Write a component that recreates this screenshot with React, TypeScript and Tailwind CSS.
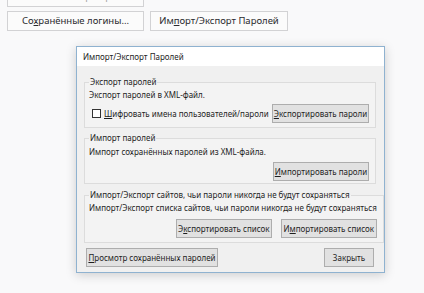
import React from 'react';

const font = { fontFamily: '"Noto Sans", "Open Sans", sans-serif' };

function TopButton({ children, disabled, w }: { children: React.ReactNode; disabled?: boolean; w: string }) {
  return (
    <button
      className={`${w} h-[20px] shrink-0 whitespace-nowrap border border-[#d2d2d4] bg-[#fbfbfb] text-[9.5px] leading-none ${disabled ? 'text-[#a0a0a0]' : 'text-[#2a2a2e]'}`}
    >
      {children}
    </button>
  );
}

function DlgButton({ children, w }: { children: React.ReactNode; w: string }) {
  return (
    <button className={`${w} h-[19px] shrink-0 whitespace-nowrap border border-[#adadad] bg-[#e1e1e1] text-[8px] leading-none text-[#1e1e1e]`}>
      {children}
    </button>
  );
}

function Group({ title, className, children }: { title: string; className: string; children: React.ReactNode }) {
  return (
    <fieldset className={`ml-[7px] w-[292px] border border-[#dcdcdc] bg-[#f3f3f3] ${className}`}>
      <legend className="ml-[4px] px-[1px] whitespace-nowrap text-[8px] leading-[12px] text-[#1e1e1e]">{title}</legend>
      {children}
    </fieldset>
  );
}

export default function App() {
  return (
    <div className="w-[424px] h-[293px] overflow-hidden bg-[#f9f9fa] pl-[7px]" style={font}>
      <div className="mt-[-13px] flex">
        <TopButton w="w-[137px]" disabled>
          Сменить мастер-пароль...
        </TopButton>
      </div>
      <div className="mt-[4px] flex gap-[6px]">
        <TopButton w="w-[137px]">
          Со<u>х</u>ранённые логины...
        </TopButton>
        <TopButton w="w-[138px]">
          Им<u>п</u>орт/Экспорт Паролей
        </TopButton>
      </div>

      {/* dialog */}
      <div className="mt-[15px] ml-[69px] w-[309px] h-[227px] border border-[#8fb2d0] bg-[#f0f0f0] shadow-[0_2px_10px_rgba(0,0,0,0.18)] flex flex-col">
        <div className="h-[19px] bg-white pl-[6px] text-[8px] leading-[19px] text-[#1e1e1e]">Импорт/Экспорт Паролей</div>

        <Group title="Экспорт паролей" className="mt-[10px] h-[52px]">
          <div className="pl-[4px] pr-[6px] mt-[1px]">
            <div className="whitespace-nowrap text-[8px] leading-[12px] text-[#1e1e1e]">Экспорт паролей в XML-файл.</div>
            <div className="mt-[3px] flex items-center justify-between">
              <label className="flex items-center gap-[3px] pl-[3px] whitespace-nowrap text-[8px] text-[#1e1e1e]">
                <span className="w-[9px] h-[9px] border border-[#333] bg-white" />
                <span>
                  <u>Ш</u>ифровать имена пользователей/пароли
                </span>
              </label>
              <DlgButton w="w-[97px]">
                <u>Э</u>кспортировать пароли
              </DlgButton>
            </div>
          </div>
        </Group>

        <Group title="Импорт паролей" className="mt-[4px] h-[52px]">
          <div className="pl-[4px] pr-[6px] mt-[2px]">
            <div className="whitespace-nowrap text-[8px] leading-[12px] text-[#1e1e1e]">Импорт сохранённых паролей из XML-файла.</div>
            <div className="mt-[4px] flex justify-end">
              <DlgButton w="w-[96px]">
                <u>И</u>мпортировать пароли
              </DlgButton>
            </div>
          </div>
        </Group>

        <Group title="Импорт/Экспорт сайтов, чьи пароли никогда не будут сохраняться" className="mt-[5px] h-[54px]">
          <div className="pl-[4px] pr-[6px] mt-[1px]">
            <div className="whitespace-nowrap text-[8px] leading-[12px] text-[#1e1e1e]">
              Импорт/Экспорт списка сайтов, чьи пароли никогда не будут сохраняться
            </div>
            <div className="mt-[5px] flex justify-end gap-[9px]">
              <DlgButton w="w-[96px]">
                Э<u>к</u>спортировать список
              </DlgButton>
              <DlgButton w="w-[96px]">
                И<u>м</u>портировать список
              </DlgButton>
            </div>
          </div>
        </Group>

        <div className="mt-[5px] flex justify-between pl-[9px] pr-[10px]">
          <DlgButton w="w-[132px]">
            <u>П</u>росмотр сохранённых паролей
          </DlgButton>
          <DlgButton w="w-[50px]">Закрыть</DlgButton>
        </div>
      </div>
    </div>
  );
}
